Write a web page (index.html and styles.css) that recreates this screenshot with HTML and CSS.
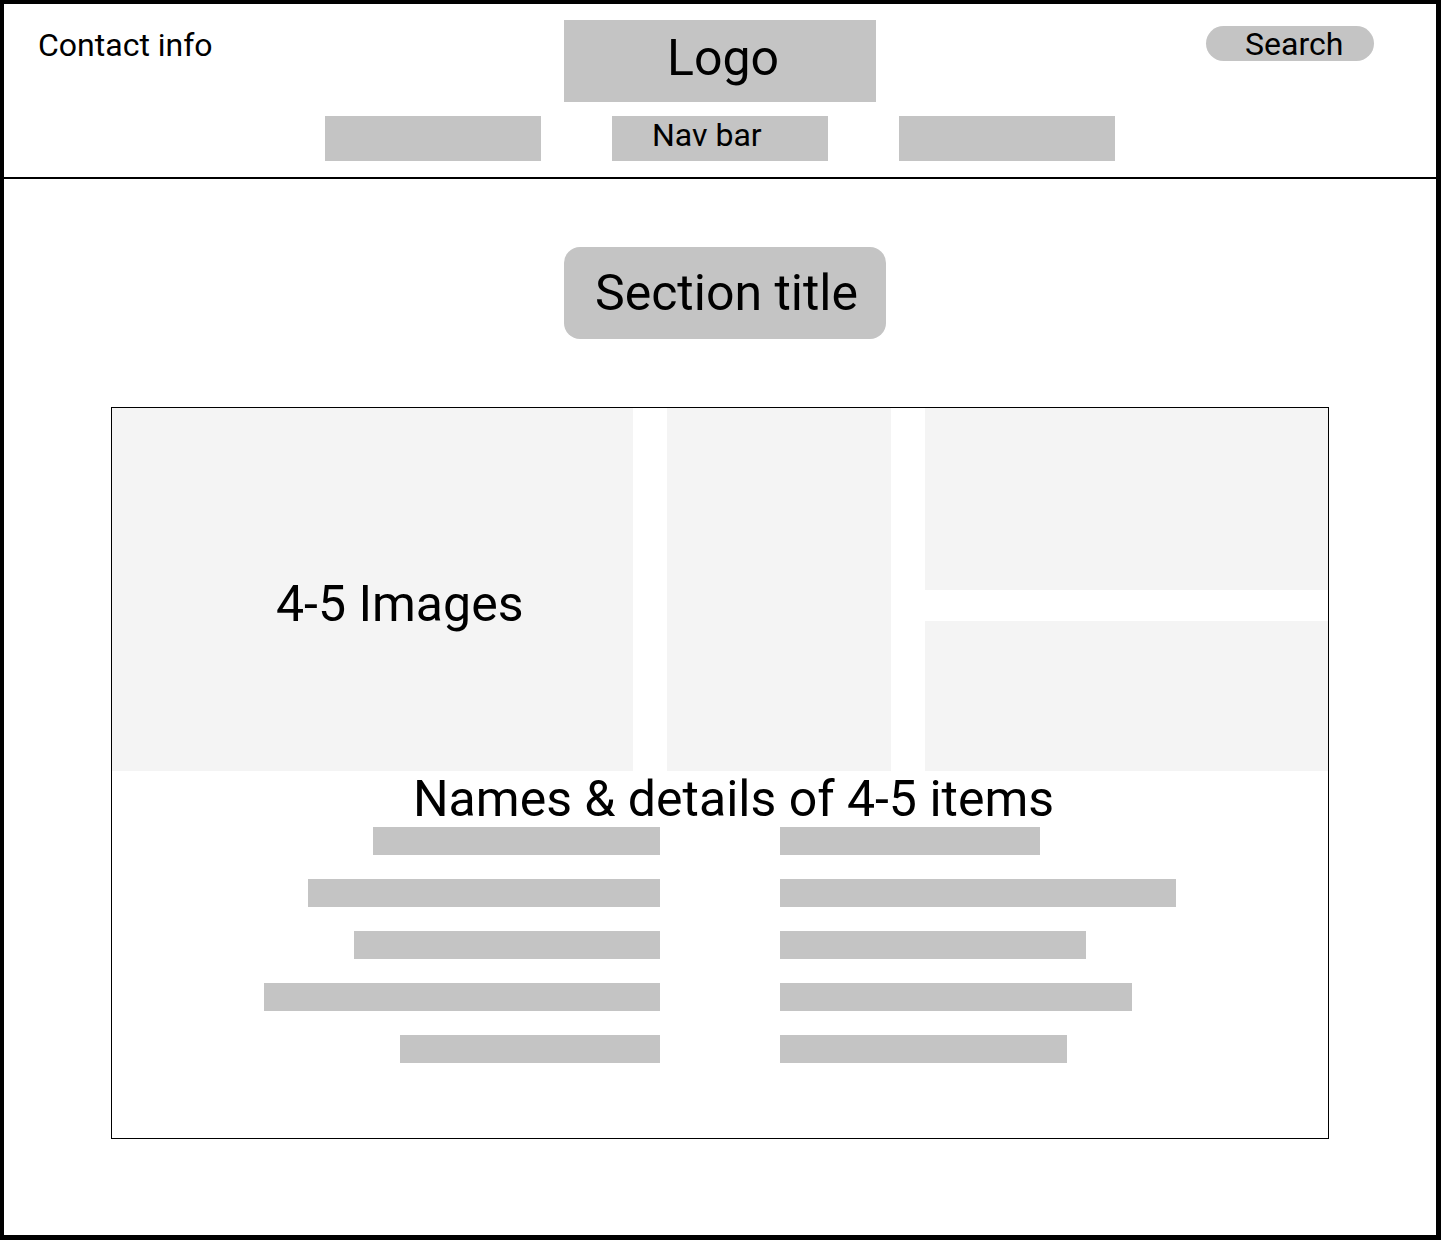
FILE: index.html
```html
<!DOCTYPE html>
<html lang="en">
<head>
    <meta charset="UTF-8">
    <meta name="viewport" content="width=device-width, initial-scale=1.0">
    <title>Wireframe</title>
    <link rel="stylesheet" href="styles.css">
</head>
<body>

<div class="page">
    <header class="header">
        <div class="contact">Contact info</div>
        <div class="logo">Logo</div>
        <div class="search">Search</div>
        <nav class="nav">
            <div class="nav-item"></div>
            <div class="nav-item">Nav bar</div>
            <div class="nav-item"></div>
        </nav>
    </header>

    <div class="title-row">
        <h1 class="section-title">Section title</h1>
    </div>

    <section class="items">
        <div class="tiles">
            <div class="tile tile-big">4-5 Images</div>
            <div class="tile tile-tall"></div>
            <div class="tile"></div>
            <div class="tile"></div>
        </div>

        <h2 class="items-title">Names &amp; details of 4-5 items</h2>

        <div class="details">
            <div class="col col-left">
                <div class="bar" style="width: 287px"></div>
                <div class="bar" style="width: 352px"></div>
                <div class="bar" style="width: 306px"></div>
                <div class="bar" style="width: 396px"></div>
                <div class="bar" style="width: 260px"></div>
            </div>
            <div class="col col-right">
                <div class="bar" style="width: 260px"></div>
                <div class="bar" style="width: 396px"></div>
                <div class="bar" style="width: 306px"></div>
                <div class="bar" style="width: 352px"></div>
                <div class="bar" style="width: 287px"></div>
            </div>
        </div>
    </section>
</div>

</body>
</html>
```

FILE: styles.css
```css
body {
    margin: 0;
    font-family: Roboto, "Liberation Sans", sans-serif;
    color: #000;
    background-color: #fff;
}

.page {
    width: 1441px;
    height: 1240px;
    box-sizing: border-box;
    border-style: solid;
    border-color: #000;
    border-width: 4px 5px 5px 4px;
    overflow: hidden;
}

/* header */
.header {
    display: grid;
    grid-template-columns: 1fr auto 1fr;
    align-items: start;
    align-content: start;
    height: 175px;
    box-sizing: border-box;
    border-bottom: 2px solid #000;
}

.contact {
    justify-self: start;
    margin: 22px 0 0 34px;
    font-size: 32px;
}

.logo {
    width: 312px;
    height: 82px;
    box-sizing: border-box;
    margin-top: 16px;
    padding: 9px 0 0 6px;
    background-color: #c4c4c4;
    font-size: 50px;
    text-align: center;
}

.search {
    justify-self: end;
    width: 168px;
    height: 35px;
    box-sizing: border-box;
    margin: 22px 62px 0 0;
    padding: 1px 0 0 39px;
    border-radius: 18px;
    background-color: #c4c4c4;
    font-size: 32px;
    line-height: 35px;
}

.nav {
    grid-column: 1 / 4;
    display: flex;
    justify-content: center;
    gap: 71px;
    margin-top: 14px;
}

.nav-item {
    width: 216px;
    height: 45px;
    box-sizing: border-box;
    padding-left: 40px;
    background-color: #c4c4c4;
    font-size: 32px;
}

/* section title */
.title-row {
    display: flex;
    justify-content: center;
    padding-left: 10px;
}

.section-title {
    width: 322px;
    height: 92px;
    box-sizing: border-box;
    margin: 68px 0 0;
    padding: 17px 0 0 31px;
    border-radius: 16px;
    background-color: #c4c4c4;
    font-size: 50px;
    font-weight: normal;
}

/* items box */
.items {
    width: 1218px;
    height: 732px;
    box-sizing: border-box;
    margin: 68px 0 0 107px;
    border: 1px solid #000;
}

.tiles {
    display: grid;
    grid-template-columns: 521px 224px 1fr;
    grid-template-rows: 182px 150px;
    column-gap: 34px;
    row-gap: 31px;
}

.tile {
    background-color: #f4f4f4;
}

.tile-big {
    grid-row: 1 / 3;
    box-sizing: border-box;
    padding: 167px 0 0 164px;
    font-size: 50px;
}

.tile-tall {
    grid-row: 1 / 3;
}

.items-title {
    margin: 0;
    padding-left: 27px;
    font-size: 50px;
    font-weight: normal;
    line-height: 56px;
    text-align: center;
}

.details {
    display: grid;
    grid-template-columns: 1fr 1fr;
    column-gap: 120px;
}

.col {
    display: flex;
    flex-direction: column;
    gap: 24px;
}

.col-left {
    align-items: flex-end;
}

.col-right {
    align-items: flex-start;
}

.bar {
    height: 28px;
    background-color: #c4c4c4;
}
```
